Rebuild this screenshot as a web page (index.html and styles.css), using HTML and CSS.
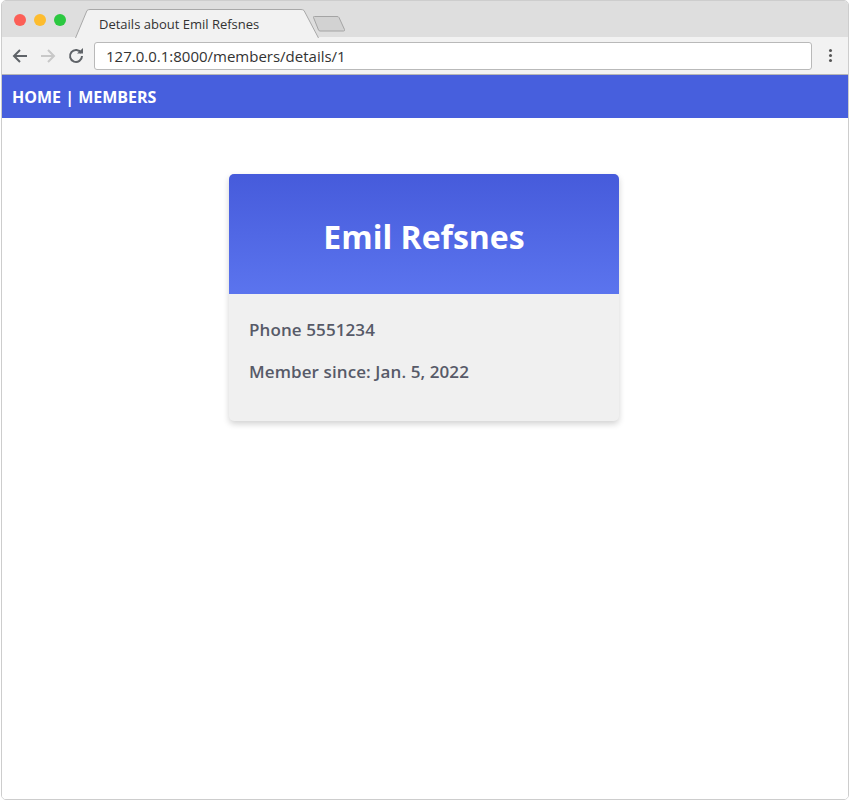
FILE: index.html
```html
<!DOCTYPE html>
<html>
<head>
<meta charset="utf-8">
<title>Details about Emil Refsnes</title>
<link rel="stylesheet" href="styles.css">
</head>
<body>
<div class="window">
  <div class="titlebar">
    <div class="lights">
      <span class="light red"></span>
      <span class="light yellow"></span>
      <span class="light green"></span>
    </div>
    <div class="tab">
      <svg class="tab-shape" width="244" height="29" viewBox="0 0 244 29">
        <path d="M0.5 29 L12 1.5 Q13 0.5 15 0.5 L226 0.5 Q228 0.5 229 1.5 L243.5 29" fill="#f2f2f2" stroke="#a8a8a8" stroke-width="1"/>
      </svg>
      <span class="tab-title">Details about Emil Refsnes</span>
    </div>
    <svg class="newtab" width="36" height="18" viewBox="0 0 36 18">
      <path d="M2.5 2.5 Q2 1.5 3.5 1.5 L26 1.5 Q27.5 1.5 28 2.5 L33.5 14.5 Q34 16 32.5 16 L9 16 Q8 16 7.5 15 Z" fill="#d2d2d2" stroke="#a4a4a4" stroke-width="1"/>
    </svg>
  </div>
  <div class="toolbar">
    <svg class="navicon" width="16" height="16" viewBox="0 0 16 16">
      <path d="M15 8 H2 M8 2 L2 8 L8 14" fill="none" stroke="#5f6368" stroke-width="2"/>
    </svg>
    <svg class="navicon" width="16" height="16" viewBox="0 0 16 16">
      <path d="M1 8 H14 M8 2 L14 8 L8 14" fill="none" stroke="#c8c8c8" stroke-width="2"/>
    </svg>
    <svg class="navicon" width="16" height="16" viewBox="0 0 16 16">
      <path d="M13.2 5 A6 6 0 1 0 14 8" fill="none" stroke="#5f6368" stroke-width="2"/>
      <path d="M9 5.5 L15 5.5 L15 0 Z" fill="#5f6368"/>
    </svg>
    <div class="address">127.0.0.1:8000/members/details/1</div>
    <div class="menu"><span></span><span></span><span></span></div>
  </div>
  <div class="page">
    <div class="topnav">
      <a class="navlink" href="#">HOME</a> | <a class="navlink" href="#">MEMBERS</a>
    </div>
    <div class="content">
      <div class="card">
        <div class="card-header">
          <h1 class="card-title">Emil Refsnes</h1>
        </div>
        <div class="card-body">
          <p class="info">Phone 5551234</p>
          <p class="info">Member since: Jan. 5, 2022</p>
        </div>
      </div>
    </div>
  </div>
</div>
</body>
</html>
```
FILE: styles.css
```css
html, body {
  margin: 0;
  padding: 0;
  background: #ffffff;
}

.window {
  width: 848px;
  height: 800px;
  margin-left: 1px;
  box-sizing: border-box;
  border: 1px solid #cdcdcd;
  border-radius: 5px;
  overflow: hidden;
  display: flex;
  flex-direction: column;
  background: #ffffff;
}

.titlebar {
  height: 36px;
  background: #dedede;
  display: flex;
  align-items: flex-end;
  flex-shrink: 0;
}

.lights {
  display: flex;
  gap: 8px;
  align-self: flex-start;
  margin: 13px 0 0 12px;
}

.light {
  width: 12px;
  height: 12px;
  border-radius: 50%;
  display: block;
}

.red { background: #fc5f57; }
.yellow { background: #fdbc2e; }
.green { background: #2bc840; }

.tab {
  position: relative;
  width: 244px;
  height: 28px;
  margin-left: 9px;
}

.tab-shape {
  position: absolute;
  left: 0;
  top: 0;
  display: block;
}

.tab-title {
  position: absolute;
  left: 24px;
  top: 6px;
  font-family: "Open Sans", "Liberation Sans", sans-serif;
  font-size: 13px;
  color: #333333;
  white-space: nowrap;
}

.newtab {
  display: block;
  margin: 0 0 4px -8px;
}

.toolbar {
  height: 38px;
  box-sizing: border-box;
  background: #f2f2f2;
  border-bottom: 1px solid #b6b6b6;
  display: flex;
  align-items: center;
  padding: 0 12px 0 10px;
  gap: 12px;
  flex-shrink: 0;
}

.navicon {
  display: block;
}

.address {
  flex: 1;
  height: 28px;
  box-sizing: border-box;
  margin-left: -2px;
  border: 1px solid #b9b9b9;
  border-radius: 3px;
  background: #ffffff;
  font-family: "Open Sans", "Liberation Sans", sans-serif;
  font-size: 15px;
  color: #333333;
  line-height: 26px;
  padding-left: 11px;
}

.menu {
  width: 12px;
  display: flex;
  flex-direction: column;
  align-items: center;
  gap: 2px;
}

.menu span {
  width: 3px;
  height: 3px;
  border-radius: 50%;
  background: #555555;
  display: block;
}

.page {
  flex: 1;
  background: #ffffff;
}

.topnav {
  height: 43px;
  background: #475fdd;
  color: #ffffff;
  font-family: "Open Sans", "Liberation Sans", sans-serif;
  font-weight: 700;
  font-size: 16px;
  line-height: 44px;
  padding-left: 10px;
}

.navlink {
  color: #ffffff;
  text-decoration: none;
}

.content {
  padding: 56px 2px 0 0;
}

.card {
  width: 390px;
  margin: 0 auto;
  border-radius: 5px;
  overflow: hidden;
  background: #f0f0f0;
  box-shadow: 0 3px 6px rgba(0, 0, 0, 0.18);
}

.card-header {
  height: 120px;
  box-sizing: border-box;
  padding-top: 4px;
  background: linear-gradient(to bottom, #465bdb, #5b74ee);
  display: flex;
  align-items: center;
  justify-content: center;
}

.card-title {
  margin: 0;
  color: #ffffff;
  font-family: "Open Sans", "Liberation Sans", sans-serif;
  font-weight: 700;
  font-size: 32px;
}

.card-body {
  padding: 26px 20px 39px;
}

.info {
  margin: 0 0 22px;
  font-family: "Open Sans", "Liberation Sans", sans-serif;
  font-weight: 600;
  font-size: 17px;
  line-height: 20px;
  letter-spacing: 0.1px;
  color: #575a68;
}

.info:last-child {
  margin-bottom: 0;
}
```
